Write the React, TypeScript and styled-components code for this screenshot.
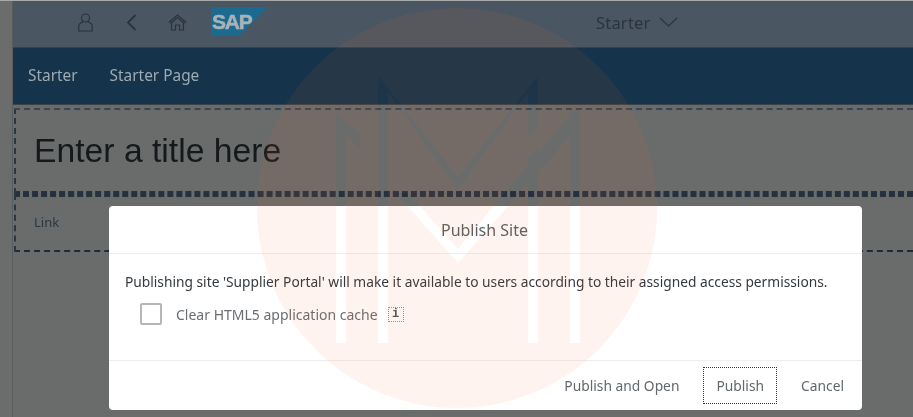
import React from 'react';
import styled, { createGlobalStyle } from 'styled-components';

const GlobalStyle = createGlobalStyle`
  html, body {
    margin: 0;
    padding: 0;
    background: #6a6c6c;
  }
`;

const uiFont = `"Noto Sans", "Open Sans", sans-serif`;

const Page = styled.div`
  position: relative;
  width: 913px;
  height: 417px;
  overflow: hidden;
  box-sizing: border-box;
  border-top: 1px solid #a8a9a9;
  padding-left: 12px;
  background: #6b6d6d;
  font-family: ${uiFont};
  filter: blur(0.45px);
`;

const Main = styled.div`
  display: flex;
  flex-direction: column;
  height: 100%;
  background: #6a6c6c;
  border-left: 1px solid #5a5c5c;
`;

const ShellBar = styled.header`
  position: relative;
  flex: 0 0 47px;
  display: flex;
  align-items: center;
  box-sizing: border-box;
  padding: 0 0 4px 65px;
  background: #4a5662;
  border-bottom: 1px solid #3a4046;
`;

const IconSlot = styled.span<{ $w: number; $gap: number }>`
  display: flex;
  width: ${p => p.$w}px;
  margin-right: ${p => p.$gap}px;
  color: #2a323b;
  svg {
    display: block;
  }
`;

const ShellTitle = styled.div`
  display: flex;
  align-items: center;
  gap: 8px;
  margin-left: 327px;
  color: #2b343e;
  font-size: 16.5px;
  letter-spacing: 0.2px;
`;

const NavBar = styled.nav`
  flex: 0 0 57px;
  display: flex;
  align-items: center;
  gap: 32px;
  box-sizing: border-box;
  padding: 0 0 2px 15px;
  background: #15334a;
  border-bottom: 1px solid #39424a;
`;

const NavItem = styled.span`
  color: #9dabb3;
  font-size: 15.4px;
`;

const Content = styled.div`
  padding-top: 3px;
`;

const Block = styled.section<{ $h: number; $top: string; $bottom: string }>`
  height: ${p => p.$h}px;
  box-sizing: border-box;
  margin-left: 1px;
  border-left: 2px dashed #2a3644;
  border-top: ${p => p.$top};
  border-bottom: ${p => p.$bottom};
  display: flex;
  align-items: center;
  padding-left: 18px;
`;

const Title = styled.h1`
  margin: 0;
  color: #15191c;
  font-family: "Liberation Sans", Arial, sans-serif;
  font-size: 33.7px;
  font-weight: 400;
`;

const BlockLink = styled.span`
  color: #2c3640;
  font-size: 13px;
  padding-bottom: 4px;
`;

const Watermark = styled.svg`
  position: absolute;
  left: 257px;
  top: 7px;
  width: 400px;
  height: 400px;
  pointer-events: none;
  z-index: 2;
`;

const Dialog = styled.div`
  position: absolute;
  left: 109px;
  top: 205px;
  width: 753px;
  height: 204px;
  box-sizing: border-box;
  display: flex;
  flex-direction: column;
  border-radius: 4px;
  background: #fff;
  z-index: 1;
`;

const DialogHead = styled.div`
  flex: 0 0 48px;
  display: flex;
  align-items: center;
  justify-content: center;
  box-sizing: border-box;
  padding-right: 2px;
  border-bottom: 1px solid #eeeeee;
  color: #5a5f63;
  font-size: 16px;
`;

const DialogBody = styled.div`
  flex: 1;
  display: flex;
  flex-direction: column;
  padding: 18px 16px 0;
  color: #34393d;
  font-size: 13.75px;
`;

const CheckRow = styled.label`
  display: flex;
  align-items: center;
  margin: 12px 0 0 15px;
  color: #6a6e72;
  font-size: 14px;
`;

const CheckBox = styled.span`
  width: 22px;
  height: 22px;
  box-sizing: border-box;
  margin-right: 14px;
  border: 2px solid #b4b6b8;
  border-radius: 2px;
  background: #fff;
`;

const InfoMark = styled.span`
  display: inline-flex;
  align-items: center;
  justify-content: center;
  width: 16px;
  height: 15px;
  box-sizing: border-box;
  margin-left: 10px;
  border: 1px dotted #8f9498;
  color: #555;
  font-family: "Liberation Mono", monospace;
  font-size: 12px;
  font-weight: 700;
`;

const DialogFoot = styled.div`
  flex: 0 0 49px;
  display: flex;
  align-items: center;
  justify-content: flex-end;
  gap: 11px;
  padding-right: 5px;
  border-top: 1px solid #eeeeee;
`;

const FootButton = styled.button<{ $focused?: boolean }>`
  height: 37px;
  padding: 0 12px;
  box-sizing: border-box;
  background: transparent;
  border: ${p => (p.$focused ? '1px dotted #333' : '1px solid transparent')};
  color: #62676b;
  font-family: ${uiFont};
  font-size: 13.8px;
`;

const UserIcon = () => (
  <svg width="15" height="19" viewBox="0 0 15 19" fill="none" stroke="currentColor" strokeWidth="1.1">
    <circle cx="7.5" cy="5" r="4" />
    <path d="M5 8.5 C3.5 10 1 10.500 0.800 12.500 V18 H14.200 V12.500 C14 10.500 11.500 10 10 8.500" />
  </svg>
);

const BackIcon = () => (
  <svg width="11" height="17" viewBox="0 0 11 17" fill="none" stroke="currentColor" strokeWidth="1.8">
    <path d="M9.500 1 L2 8.500 L9.500 16" />
  </svg>
);

const HomeIcon = () => (
  <svg width="19" height="17" viewBox="0 0 19 17" fill="none" stroke="currentColor" strokeWidth="1.1">
    <path d="M0.700 8.500 L9.500 1 L18.300 8.500" />
    <path d="M3.500 7.500 V16 H7.500 V11 H11.500 V16 H15.500 V7.500" />
    <path d="M2.500 9.500 L9.500 3.500 L16.500 9.500" />
  </svg>
);

const SapLogo = () => (
  <svg width="58" height="30" viewBox="0 0 58 30">
    <polygon points="0,0 57,0 28,29 0,29" fill="#1c6a8f" />
    <text x="1" y="22" fill="#a8b3b8" stroke="#a8b3b8" strokeWidth="0.5" fontFamily="Liberation Sans" fontWeight="700" fontSize="21" letterSpacing="-1.2">
      SAP
    </text>
  </svg>
);

const DownIcon = () => (
  <svg width="19" height="10" viewBox="0 0 19 10" fill="none" stroke="currentColor" strokeWidth="1.1">
    <path d="M1 1 L9.500 9 L18 1" />
  </svg>
);

// the M is cut out of the disc, so what is behind shows through it
const monogram = [
  '336,343 346,343 346,134 360,150 360,133 336,112',
  '378,343 388,343 388,90 378,78',
  '378,78 380,78 458,177 536,78 538,78 458,190',
  '528,88 538,78 538,127 528,137',
  '528,343 538,343 538,146 528,158',
  '570,343 580,343 580,112 570,112',
  '458,249 572,112 580,112 580,125 458,263 396,193 408,193',
];

const WatermarkDisc = () => (
  <Watermark viewBox="257 8 400 400">
    <defs>
      <mask id="monogram-cut">
        <rect x="257" y="8" width="400" height="400" fill="#fff" />
        {monogram.map(points => (
          <polygon key={points} points={points} fill="#000" />
        ))}
        {/* the cut only half shows over the nav bar */}
        <rect x="257" y="8" width="400" height="100" fill="#fff" fillOpacity="0.55" />
      </mask>
    </defs>
    <circle cx="457" cy="208" r="200" fill="rgb(245, 100, 55)" fillOpacity="0.08" mask="url(#monogram-cut)" />
  </Watermark>
);

export default function App() {
  return (
    <>
      <GlobalStyle />
      <Page>
        <Main>
          <ShellBar>
            <IconSlot $w={15} $gap={33}><UserIcon /></IconSlot>
            <IconSlot $w={11} $gap={31}><BackIcon /></IconSlot>
            <IconSlot $w={19} $gap={24}><HomeIcon /></IconSlot>
            <IconSlot $w={58} $gap={0}><SapLogo /></IconSlot>
            <ShellTitle>
              Starter <DownIcon />
            </ShellTitle>
          </ShellBar>
          <NavBar>
            <NavItem>Starter</NavItem>
            <NavItem>Starter Page</NavItem>
          </NavBar>
          <Content>
            <Block $h={86} $top="2px dashed #3a4654" $bottom="3px dashed #26313d">
              <Title>Enter a title here</Title>
            </Block>
            <Block $h={58} $top="3px dashed #26313d" $bottom="2px dashed #1f2a38">
              <BlockLink>Link</BlockLink>
            </Block>
          </Content>
        </Main>
        <Dialog>
          <DialogHead>Publish Site</DialogHead>
          <DialogBody>
            Publishing site 'Supplier Portal' will make it available to users according to their assigned access permissions.
            <CheckRow>
              <CheckBox />
              Clear HTML5 application cache
              <InfoMark>i</InfoMark>
            </CheckRow>
          </DialogBody>
          <DialogFoot>
            <FootButton>Publish and Open</FootButton>
            <FootButton $focused>Publish</FootButton>
            <FootButton>Cancel</FootButton>
          </DialogFoot>
        </Dialog>
        <WatermarkDisc />
      </Page>
    </>
  );
}
